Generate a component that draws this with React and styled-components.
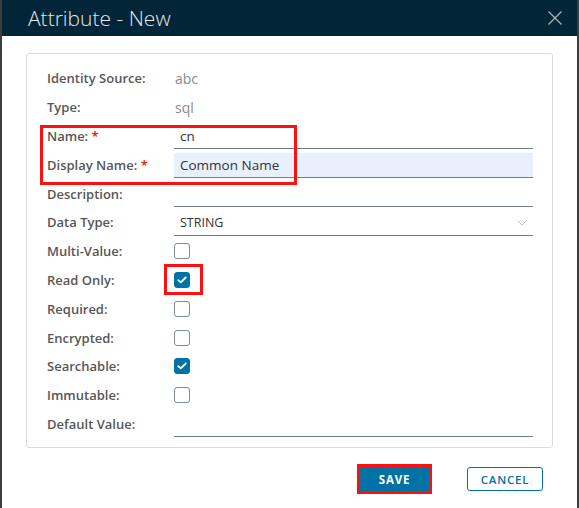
import React from 'react'
import styled, { createGlobalStyle } from 'styled-components'

const Global = createGlobalStyle`
  html, body { margin: 0; padding: 0; background: #fff; }
  body { font-family: "Open Sans", Lato, sans-serif; }
  * { box-sizing: border-box; }
`

const Frame = styled.div`
  width: 579px;
  height: 508px;
  border-left: 2px solid #3d3d3d;
  border-right: 2px solid #3d3d3d;
  display: flex;
  flex-direction: column;
  background: #fff;
`

const Header = styled.header`
  height: 36px;
  background: #022538;
  display: flex;
  align-items: center;
  justify-content: space-between;
  padding: 0 14px 0 26px;

  h1 {
    margin: 0;
    font-size: 21px;
    font-weight: 300;
    color: #e6e6e6;
  }
`

const Close = styled.button`
  border: 0;
  background: none;
  padding: 0;
  width: 16px;
  height: 16px;
  display: flex;
  cursor: pointer;
`

const Body = styled.div`
  padding: 17px 24px 0 24px;
`

const Card = styled.section`
  position: relative;
  border: 1px solid #dcdcdc;
  border-radius: 3px;
  padding: 10px 19px 9px 20px;
`

const Row = styled.div`
  display: grid;
  grid-template-columns: 127px 1fr;
  height: 28.8px;
  align-items: center;
`

const Label = styled.label`
  font-size: 13px;
  font-weight: 600;
  color: #575757;

  span { color: #e02200; }
`

const Static = styled.div`
  font-size: 14px;
  color: #8a8a8a;
  padding-left: 1px;
`

const Input = styled.div`
  align-self: end;
  height: 25px;
  border-bottom: 1px solid #6f7f89;
  background: ${({ filled }) => (filled ? '#e8f0fe' : 'transparent')};
  font-size: 13.5px;
  color: #333;
  padding: 0 6px;
  display: flex;
  align-items: center;
  justify-content: space-between;
  margin-bottom: 1px;
`

const SelectText = styled.span`
  font-size: 12.5px;
  color: #333;
`

const Box = styled.div`
  width: 16px;
  height: 16px;
  border-radius: 3px;
  border: 1px solid ${({ checked }) => (checked ? '#0072a3' : '#7c8b95')};
  background: ${({ checked }) => (checked ? '#0072a3' : '#fff')};
  display: flex;
  align-items: center;
  justify-content: center;
`

const Highlight = styled.div`
  position: absolute;
  border: 3px solid #ff1010;
  pointer-events: none;
`

const Footer = styled.footer`
  display: flex;
  justify-content: flex-end;
  align-items: center;
  gap: 38px;
  padding: 19px 34px 0 0;
`

const Button = styled.button`
  height: 24px;
  border-radius: 3px;
  font-family: "Open Sans", Lato, sans-serif;
  font-size: 11.5px;
  font-weight: ${({ primary }) => (primary ? 700 : 600)};
  letter-spacing: 0.8px;
  padding: 0;
  border: 1px solid #0072a3;
  background: ${({ primary }) => (primary ? '#0072a3' : '#fff')};
  color: ${({ primary }) => (primary ? '#fff' : '#0072a3')};
  width: ${({ primary }) => (primary ? '69px' : '76px')};
  ${({ marked }) => marked && 'outline: 3px solid #ff1010; outline-offset: 0px; border-radius: 0;'}
`

const Check = () => (
  <svg width="10" height="8" viewBox="0 0 10 8">
    <path d="M1.3 4.2 L3.8 6.4 L8.7 1.5" fill="none" stroke="#fff" strokeWidth="1.8" strokeLinecap="round" strokeLinejoin="round" />
  </svg>
)

const checks = [
  ['Multi-Value:', false],
  ['Read Only:', true],
  ['Required:', false],
  ['Encrypted:', false],
  ['Searchable:', true],
  ['Immutable:', false],
]

export default function App() {
  return (
    <Frame>
      <Global />
      <Header>
        <h1>Attribute - New</h1>
        <Close aria-label="close">
          <svg width="16" height="16" viewBox="0 0 16 16">
            <path d="M1.5 1.5 L14.5 14.5 M14.5 1.5 L1.5 14.5" stroke="#a9b3bb" strokeWidth="1.3" />
          </svg>
        </Close>
      </Header>
      <Body>
        <Card>
          <Row>
            <Label>Identity Source:</Label>
            <Static>abc</Static>
          </Row>
          <Row>
            <Label>Type:</Label>
            <Static>sql</Static>
          </Row>
          <Row>
            <Label>Name: <span>*</span></Label>
            <Input>cn</Input>
          </Row>
          <Row>
            <Label>Display Name: <span>*</span></Label>
            <Input filled>Common Name</Input>
          </Row>
          <Row>
            <Label>Description:</Label>
            <Input />
          </Row>
          <Row>
            <Label>Data Type:</Label>
            <Input>
              <SelectText>STRING</SelectText>
              <svg width="10" height="6" viewBox="0 0 10 6">
                <path d="M0.5 0.5 L5 5 L9.5 0.5" fill="none" stroke="#b5bcc2" strokeWidth="1" />
              </svg>
            </Input>
          </Row>
          {checks.map(([label, checked]) => (
            <Row key={label}>
              <Label>{label}</Label>
              <Box checked={checked}>{checked && <Check />}</Box>
            </Row>
          ))}
          <Row>
            <Label>Default Value:</Label>
            <Input />
          </Row>
          <Highlight style={{ top: 71, left: 13, width: 257, height: 60 }} />
          <Highlight style={{ top: 210, left: 137, width: 39, height: 31 }} />
        </Card>
      </Body>
      <Footer>
        <Button primary marked>SAVE</Button>
        <Button>CANCEL</Button>
      </Footer>
    </Frame>
  )
}
